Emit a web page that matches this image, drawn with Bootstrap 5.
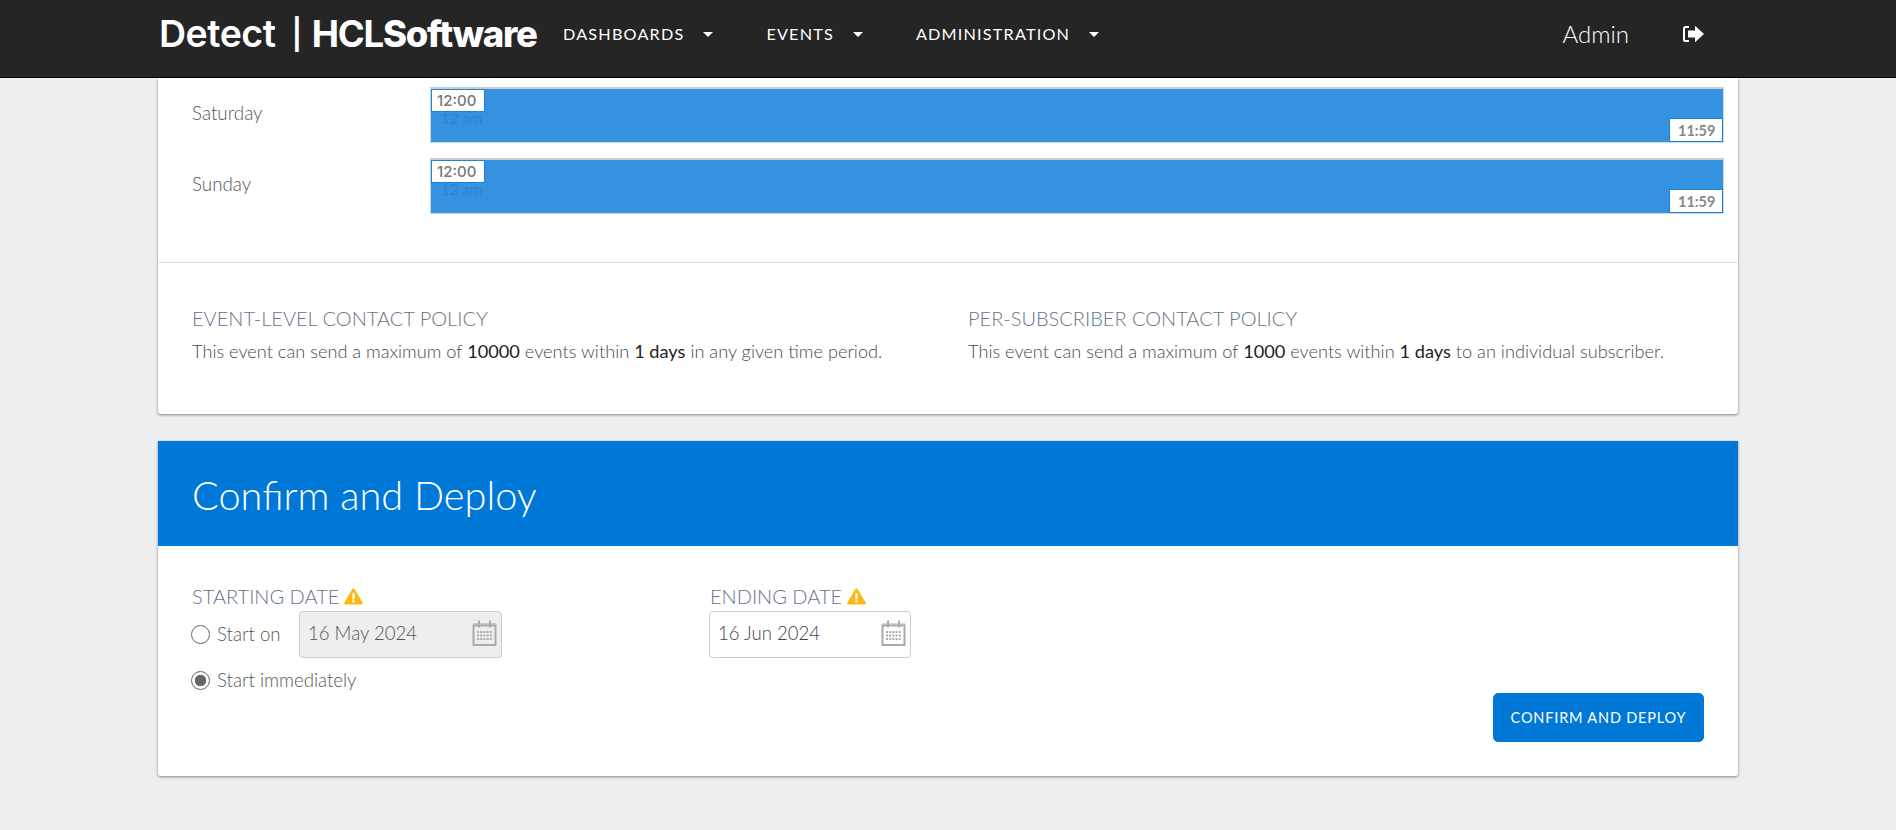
<!DOCTYPE html>
<html lang="en">
<head>
<meta charset="utf-8">
<title>Detect</title>
<link href="https://cdn.jsdelivr.net/npm/bootstrap@5.3.0/dist/css/bootstrap.min.css" rel="stylesheet">
<style>
html,body{height:830px;overflow:hidden}
body{background:#eee;font-family:"Lato","Liberation Sans",sans-serif;font-weight:300;color:#555;font-size:16px}
.top-bar{--bs-navbar-nav-link-padding-x:0;height:78px;background:#252525;padding:0 0 9px 159px;border-bottom:1px solid #000;align-items:center;flex-wrap:nowrap}
.brand-logo{font-family:"Inter","Liberation Sans",sans-serif;color:#fff;font-size:37.5px;line-height:69px;font-weight:600;letter-spacing:-.5px;width:404px;white-space:nowrap;padding:0;margin:0}
.brand-logo b{font-size:36.5px;font-weight:800;letter-spacing:-1.3px}
.brand-logo .hcl{font-size:36.5px;font-weight:700;letter-spacing:-1.2px}
.brand-logo .sep{margin:0 10px 0 16px;font-size:30px;font-weight:600;vertical-align:2px}
.brand-logo:hover{color:#fff}
.top-link{color:#fff;font-weight:400;font-size:16.2px;letter-spacing:1.2px;white-space:nowrap}
.top-link:hover,.top-link:focus{color:#fff}
.top-link.dropdown-toggle::after{margin-left:19px;vertical-align:.15em;border-top-width:.36em;border-left-width:.36em;border-right-width:.36em}
.top-links{gap:53px}
.user-zone{margin-left:auto;display:flex;align-items:center;color:#fff;font-size:24px;padding-right:192px;gap:53px}
.logout-ico{width:22px;height:18px;fill:#fff;display:block}
.page-main{width:1580px;margin:0 auto}
.sheet{border:0;border-radius:0 0 3px 3px;box-shadow:0 1px 3px rgba(0,0,0,.45);background:#fff}
.sheet+.sheet{margin-top:27px}
.hours{padding:9px 14px 48px 34px;border-bottom:1px solid #ddd}
.hours-row{display:flex;height:56px;align-items:center}
.hours-row+.hours-row{margin-top:15px}
.day-name{width:238px;font-size:18.8px;color:#555;flex:none;padding-bottom:3px}
.day-bar{position:relative;flex:1;height:56px;background:#3492e0;border:1px solid #cdd9e3;border-top:2px solid #ccc}
.time-tag{position:absolute;background:#fff;border:1px solid #1b82dc;color:#888;font-weight:700;line-height:1}
.tag-start{left:0;top:0;width:54px;height:23px;font-family:"Inter","Liberation Sans",sans-serif;font-size:15px;font-weight:500;padding:3px 0 0 5px;color:#777}
.tag-end{right:0;bottom:0;width:54px;height:24px;font-size:14.5px;padding:5px 0 0 8px}
.faint-am{position:absolute;left:10px;top:22px;color:#2b84d0;font-size:15px;font-weight:400;line-height:1}
.policy{padding:43px 34px 51px}
.policy .col-a{width:776px;flex:none;padding:0}
.policy .col-b{flex:1;padding:0}
.field-title{font-size:20px;line-height:24px;color:#667388;font-weight:300;margin:0}
.policy p{margin:9px 0 0;font-size:18.2px;line-height:24px;color:#4a4a4a}
.policy strong{font-weight:400;color:#222}
.deploy-head{background:#0078d7;color:#fff;height:105px;padding:3px 34px 0;display:flex;align-items:center}
.deploy-head h2{font-size:39.7px;font-weight:300;margin:0;line-height:1}
.deploy-body{padding:46px 34px 34px;height:230px;position:relative}
.date-cols{display:flex}
.date-a{width:518px;flex:none}
.date-title{display:flex;align-items:center;gap:5px;height:20px;margin-top:-6px}
.warn-ico{width:19px;height:17px;display:block}
.start-line{display:flex;align-items:center;margin-top:5px}
.date-box{position:relative;width:203px;height:47px}
.date-box .form-control{height:47px;border:1px solid #ccc;border-radius:4px;padding:0 8px 3px;font-size:18.6px;font-weight:300;color:#444;box-shadow:none}
.date-box .form-control:disabled{background:#eee;color:#555}
.cal-ico{position:absolute;right:5px;top:8px;width:25px;height:28px;display:block;fill:none;stroke:#aaa}
.pick{margin:0;padding:0;display:flex;align-items:center;min-height:0;gap:7px;font-size:18.6px;color:#555}
.pick .form-check-input{float:none;margin:0;width:19px;height:19px;border:1px solid #666;background-image:none;background-color:#fff;box-shadow:none;flex:none}
.pick .form-check-input:checked{background:radial-gradient(circle,#666 0 5.5px,#fff 6px);border-color:#666}
.pick-a{width:108px;flex:none;margin-left:-1px}
.pick-b{margin:9px 0 0 -1px}
.end-col{margin-left:-1px}
.end-col .date-title{margin-left:1px}
.end-col .date-box{margin-top:5px;width:202px}
.deploy-btn{position:absolute;right:34px;bottom:34px;width:211px;height:49px;background:#0078d7;border:1px solid #0078d7;border-radius:5px;font-size:14.5px;font-weight:400;letter-spacing:.82px;padding:0;color:#fff}
</style>
</head>
<body>
<nav class="navbar navbar-expand top-bar">
  <span class="navbar-brand brand-logo">Detect<span class="sep">|</span><span class="hcl">HCL</span><b>Software</b></span>
  <ul class="navbar-nav top-links">
    <li class="nav-item dropdown"><a class="nav-link dropdown-toggle top-link" href="#" role="button" data-bs-toggle="dropdown">DASHBOARDS</a></li>
    <li class="nav-item dropdown"><a class="nav-link dropdown-toggle top-link" href="#" role="button" data-bs-toggle="dropdown">EVENTS</a></li>
    <li class="nav-item dropdown"><a class="nav-link dropdown-toggle top-link" href="#" role="button" data-bs-toggle="dropdown">ADMINISTRATION</a></li>
  </ul>
  <div class="user-zone">
    <span>Admin</span>
    <svg class="logout-ico" viewBox="0 0 22 18" aria-label="Log out"><path d="M7 1H3.5A2.5 2.5 0 0 0 1 3.5v11A2.5 2.5 0 0 0 3.5 17H7v-2H3.5a.5.5 0 0 1-.5-.5v-11a.5.5 0 0 1 .5-.5H7z"/><path d="M13 0.8 22 9l-9 8.200v-4.700H6V5.500h7z"/></svg>
  </div>
</nav>
<main class="page-main">
  <section class="card sheet">
    <div class="hours">
      <div class="hours-row">
        <div class="day-name">Saturday</div>
        <div class="day-bar"><span class="faint-am">12 am</span><span class="time-tag tag-start">12:00</span><span class="time-tag tag-end">11:59</span></div>
      </div>
      <div class="hours-row">
        <div class="day-name">Sunday</div>
        <div class="day-bar"><span class="faint-am">12 am</span><span class="time-tag tag-start">12:00</span><span class="time-tag tag-end">11:59</span></div>
      </div>
    </div>
    <div class="row g-0 policy">
      <div class="col-a">
        <h3 class="field-title">EVENT-LEVEL CONTACT POLICY</h3>
        <p>This event can send a maximum of <strong>10000</strong> events within <strong>1 days</strong> in any given time period.</p>
      </div>
      <div class="col-b">
        <h3 class="field-title">PER-SUBSCRIBER CONTACT POLICY</h3>
        <p>This event can send a maximum of <strong>1000</strong> events within <strong>1 days</strong> to an individual subscriber.</p>
      </div>
    </div>
  </section>
  <section class="card sheet">
    <div class="deploy-head"><h2>Confirm and Deploy</h2></div>
    <div class="deploy-body">
      <div class="date-cols">
        <div class="date-a">
          <div class="date-title"><span class="field-title">STARTING DATE</span>
            <svg class="warn-ico" viewBox="0 0 20 18"><path d="M10 0.500c.6 0 1.100.3 1.400.8l8.200 14c.6 1-.1 2.200-1.300 2.200H1.700c-1.200 0-1.900-1.200-1.300-2.200l8.200-14c.3-.5.800-.8 1.400-.8z" fill="#fdb813"/><rect x="8.800" y="5.500" width="2.400" height="6.500" fill="#fff"/><rect x="8.800" y="13" width="2.400" height="2.400" fill="#fff"/></svg>
          </div>
          <div class="start-line">
            <label class="form-check pick pick-a"><input class="form-check-input" type="radio" name="startmode"> Start on</label>
            <div class="date-box">
              <input class="form-control" type="text" value="16 May 2024" disabled>
              <svg class="cal-ico" viewBox="0 0 25 28"><path d="M1.500 6.500h22v19.500h-22z" stroke-width="2"/><path d="M1 5h23" stroke-width="1"/><path d="M7 1.500v7M18 1.500v7" stroke-width="2"/><path d="M5 13h15M5 16.500h15M5 20h15" stroke-width="2" stroke-dasharray="2 1.200"/></svg>
            </div>
          </div>
          <label class="form-check pick pick-b"><input class="form-check-input" type="radio" name="startmode" checked> Start immediately</label>
        </div>
        <div class="end-col">
          <div class="date-title"><span class="field-title">ENDING DATE</span>
            <svg class="warn-ico" viewBox="0 0 20 18"><path d="M10 0.500c.6 0 1.100.3 1.400.8l8.200 14c.6 1-.1 2.200-1.300 2.200H1.700c-1.200 0-1.900-1.200-1.300-2.200l8.200-14c.3-.5.800-.8 1.400-.8z" fill="#fdb813"/><rect x="8.800" y="5.500" width="2.400" height="6.500" fill="#fff"/><rect x="8.800" y="13" width="2.400" height="2.400" fill="#fff"/></svg>
          </div>
          <div class="date-box">
            <input class="form-control" type="text" value="16 Jun 2024">
            <svg class="cal-ico" viewBox="0 0 25 28"><path d="M1.500 6.500h22v19.500h-22z" stroke-width="2"/><path d="M1 5h23" stroke-width="1"/><path d="M7 1.500v7M18 1.500v7" stroke-width="2"/><path d="M5 13h15M5 16.500h15M5 20h15" stroke-width="2" stroke-dasharray="2 1.200"/></svg>
          </div>
        </div>
      </div>
      <button type="button" class="btn btn-primary deploy-btn">CONFIRM AND DEPLOY</button>
    </div>
  </section>
</main>
<script src="https://cdn.jsdelivr.net/npm/bootstrap@5.3.0/dist/js/bootstrap.bundle.min.js"></script>
</body>
</html>
